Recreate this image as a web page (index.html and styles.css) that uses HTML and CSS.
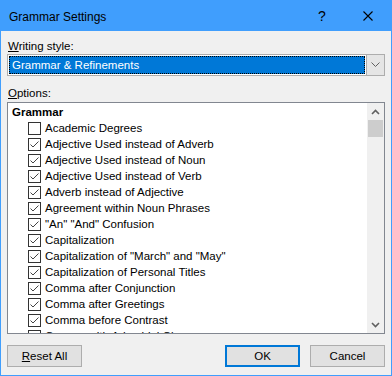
FILE: index.html
```html
<!DOCTYPE html>
<html>
<head>
<meta charset="utf-8">
<link rel="stylesheet" href="styles.css">
</head>
<body>
<div class="window">
  <div class="titlebar">
    <span class="title">Grammar Settings</span>
    <span class="cap-btn help">?</span>
    <span class="cap-btn close"><svg width="10" height="10" viewBox="0 0 10 10"><path d="M0.5 0.5 L9.5 9.5 M9.5 0.5 L0.5 9.5" stroke="#000" stroke-width="1.1" fill="none"/></svg></span>
  </div>
  <div class="content">
    <div class="label"><u>W</u>riting style:</div>
    <div class="combo">
      <div class="combo-sel"><span>Grammar &amp; Refinements</span></div>
      <div class="combo-btn"><svg width="9" height="6" viewBox="0 0 9 6"><path d="M0.5 0.5 L4.5 4.5 L8.5 0.5" stroke="#606060" stroke-width="1" fill="none"/></svg></div>
    </div>
    <div class="label opt-label"><u>O</u>ptions:</div>
    <div class="listbox">
      <div class="items">
        <div class="group">Grammar</div>
        <div class="row"><span class="cb"></span>Academic Degrees</div>
        <div class="row"><span class="cb on"><svg width="11" height="11" viewBox="0 0 11 11"><path d="M1.5 5.5 L4 8 L9.5 2.5" stroke="#444" stroke-width="1" fill="none"/></svg></span>Adjective Used instead of Adverb</div>
        <div class="row"><span class="cb on"><svg width="11" height="11" viewBox="0 0 11 11"><path d="M1.5 5.5 L4 8 L9.5 2.5" stroke="#444" stroke-width="1" fill="none"/></svg></span>Adjective Used instead of Noun</div>
        <div class="row"><span class="cb on"><svg width="11" height="11" viewBox="0 0 11 11"><path d="M1.5 5.5 L4 8 L9.5 2.5" stroke="#444" stroke-width="1" fill="none"/></svg></span>Adjective Used instead of Verb</div>
        <div class="row"><span class="cb on"><svg width="11" height="11" viewBox="0 0 11 11"><path d="M1.5 5.5 L4 8 L9.5 2.5" stroke="#444" stroke-width="1" fill="none"/></svg></span>Adverb instead of Adjective</div>
        <div class="row"><span class="cb on"><svg width="11" height="11" viewBox="0 0 11 11"><path d="M1.5 5.5 L4 8 L9.5 2.5" stroke="#444" stroke-width="1" fill="none"/></svg></span>Agreement within Noun Phrases</div>
        <div class="row"><span class="cb on"><svg width="11" height="11" viewBox="0 0 11 11"><path d="M1.5 5.5 L4 8 L9.5 2.5" stroke="#444" stroke-width="1" fill="none"/></svg></span>"An" "And" Confusion</div>
        <div class="row"><span class="cb on"><svg width="11" height="11" viewBox="0 0 11 11"><path d="M1.5 5.5 L4 8 L9.5 2.5" stroke="#444" stroke-width="1" fill="none"/></svg></span>Capitalization</div>
        <div class="row"><span class="cb on"><svg width="11" height="11" viewBox="0 0 11 11"><path d="M1.5 5.5 L4 8 L9.5 2.5" stroke="#444" stroke-width="1" fill="none"/></svg></span>Capitalization of "March" and "May"</div>
        <div class="row"><span class="cb on"><svg width="11" height="11" viewBox="0 0 11 11"><path d="M1.5 5.5 L4 8 L9.5 2.5" stroke="#444" stroke-width="1" fill="none"/></svg></span>Capitalization of Personal Titles</div>
        <div class="row"><span class="cb on"><svg width="11" height="11" viewBox="0 0 11 11"><path d="M1.5 5.5 L4 8 L9.5 2.5" stroke="#444" stroke-width="1" fill="none"/></svg></span>Comma after Conjunction</div>
        <div class="row"><span class="cb on"><svg width="11" height="11" viewBox="0 0 11 11"><path d="M1.5 5.5 L4 8 L9.5 2.5" stroke="#444" stroke-width="1" fill="none"/></svg></span>Comma after Greetings</div>
        <div class="row"><span class="cb on"><svg width="11" height="11" viewBox="0 0 11 11"><path d="M1.5 5.5 L4 8 L9.5 2.5" stroke="#444" stroke-width="1" fill="none"/></svg></span>Comma before Contrast</div>
        <div class="row"><span class="cb on"><svg width="11" height="11" viewBox="0 0 11 11"><path d="M1.5 5.5 L4 8 L9.5 2.5" stroke="#444" stroke-width="1" fill="none"/></svg></span>Comma with Adverbial Clauses</div>
      </div>
      <div class="scrollbar">
        <div class="arrow"><svg width="9" height="6" viewBox="0 0 9 6"><path d="M1 5 L4.5 1.5 L8 5" stroke="#606060" stroke-width="1.6" fill="none"/></svg></div>
        <div class="thumb"></div>
        <div class="track"></div>
        <div class="arrow"><svg width="9" height="6" viewBox="0 0 9 6"><path d="M1 1 L4.5 4.5 L8 1" stroke="#606060" stroke-width="1.6" fill="none"/></svg></div>
      </div>
    </div>
    <div class="buttons">
      <button class="btn"><u>R</u>eset All</button>
      <span class="spacer"></span>
      <button class="btn default">OK</button>
      <button class="btn">Cancel</button>
    </div>
  </div>
</div>
</body>
</html>
```
FILE: styles.css
```css
html, body {
  margin: 0;
  padding: 0;
  background: #f0f0f0;
}
body {
  font-family: "Liberation Sans", Arial, sans-serif;
  font-size: 11.5px;
  color: #000;
}
.window {
  width: 392px;
  height: 376px;
  box-sizing: border-box;
  border: 1px solid #409efd;
  background: #f0f0f0;
  overflow: hidden;
}
.titlebar {
  height: 30px;
  background: #409efd;
  display: flex;
  align-items: center;
}
.title {
  flex: 1;
  padding-left: 8px;
  font-size: 12px;
  padding-top: 1px;
}
.cap-btn {
  width: 46px;
  height: 30px;
  display: flex;
  align-items: center;
  justify-content: center;
}
.help {
  font-size: 14px;
}
.content {
  padding: 8px 6px 0 6px;
}
.label {
  line-height: 15px;
  height: 15px;
  padding-left: 1px;
}
.combo {
  height: 22px;
  box-sizing: border-box;
  border: 1px solid #adadad;
  background: #fff;
  display: flex;
  padding: 1px 0 1px 1px;
}
.combo-sel {
  flex: 1;
  background: #0078d7;
  color: #fff;
  outline: 1px dotted #000;
  outline-offset: -1px;
  display: flex;
  align-items: center;
  padding-left: 3px;
  margin-right: 1px;
}
.combo-btn {
  width: 17px;
  margin: -1px 0;
  background: #e5e5e5;
  border-left: 1px solid #adadad;
  display: flex;
  align-items: center;
  justify-content: center;
}
.opt-label {
  margin-top: 10px;
}
.listbox {
  margin-top: 1px;
  height: 232px;
  box-sizing: border-box;
  border: 1px solid #828790;
  background: #fff;
  display: flex;
  overflow: hidden;
}
.items {
  flex: 1;
  padding-top: 1px;
  overflow: hidden;
}
.group {
  height: 16px;
  line-height: 16px;
  font-weight: bold;
  padding-left: 4px;
}
.row {
  height: 16px;
  line-height: 16px;
  display: flex;
  align-items: center;
  padding-left: 20px;
  white-space: nowrap;
}
.cb {
  width: 13px;
  height: 13px;
  box-sizing: border-box;
  border: 1px solid #333;
  background: #fff;
  margin-right: 4px;
  display: flex;
}
.scrollbar {
  width: 17px;
  background: #f0f0f0;
  display: flex;
  flex-direction: column;
}
.arrow {
  height: 17px;
  display: flex;
  align-items: center;
  justify-content: center;
}
.thumb {
  height: 17px;
  margin: 0 1px;
  background: #cdcdcd;
}
.track {
  flex: 1;
}
.buttons {
  margin-top: 11px;
  display: flex;
  gap: 10px;
}
.spacer {
  flex: 1;
}
.btn {
  width: 75px;
  height: 22px;
  box-sizing: border-box;
  border: 1px solid #adadad;
  background: #e1e1e1;
  font-family: inherit;
  font-size: 11.5px;
  color: #000;
  padding: 0;
}
.btn.default {
  border: 2px solid #0078d7;
}
```
